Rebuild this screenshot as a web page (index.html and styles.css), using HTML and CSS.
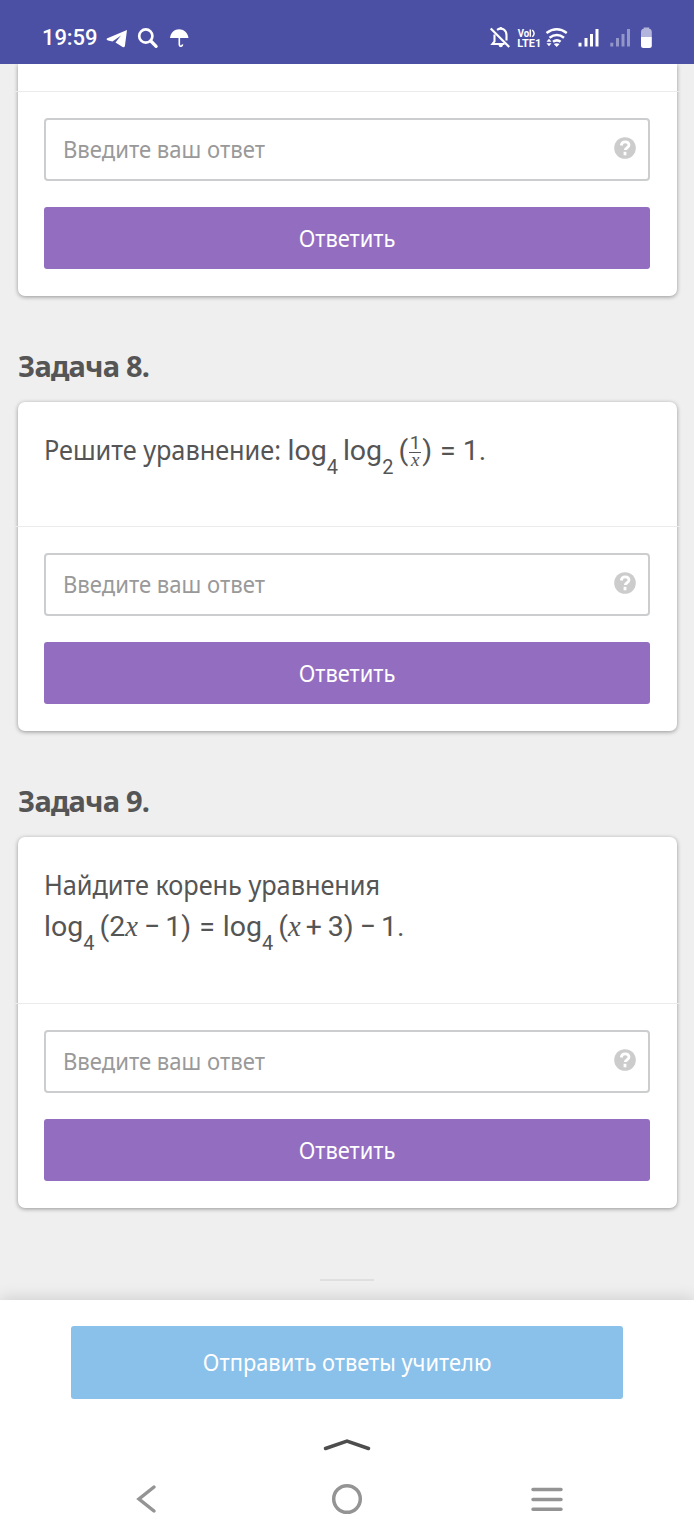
FILE: index.html
```html
<!DOCTYPE html>
<html lang="ru">
<head>
<meta charset="utf-8">
<title>Задачи</title>
<link rel="stylesheet" href="styles.css">
</head>
<body>
<header class="status">
  <span class="clock">19:59</span>
  <svg class="status-left" width="90" height="26" viewBox="105 25 90 26" fill="#fff">
    <path d="M127 30 106.800 38.500Q106 40 108 40.500L112.500 41.500 121 35.500 115.500 42.500 123 47.200Q124.500 47.500 124.900 46Z"/>
    <circle cx="145.800" cy="36" r="6.600" fill="none" stroke="#fff" stroke-width="2.700"/>
    <path d="m150.800 41 5.300 5.300" stroke="#fff" stroke-width="3.300" stroke-linecap="round"/>
    <path d="M170 38C171 26.300 187 26.300 188.500 38Z"/>
    <path d="M179.300 37v7.500q.2 2 1.900 1.700 1.500-.3 1.300-1.800" fill="none" stroke="#fff" stroke-width="1.600"/>
  </svg>
  <svg class="status-right" width="166" height="26" viewBox="488 25 166 26" fill="none" stroke="#fff">
    <path d="m490.700 28.500 18.500 18.500" stroke-width="2.200"/>
    <path d="M494.500 34.500v7l-2 2.500h12M497 29.800c5-3 9.500.2 9.500 5.200v5.500M500.700 27v2.500" stroke-width="2.100"/>
    <path d="M498.500 45h4.500q-.4 2.200-2.250 2.200T498.500 45Z" fill="#fff" stroke="none"/>
    <g fill="#fff" stroke="none" class="lte">
      <text x="517.700" y="36.800" textLength="11.500" lengthAdjust="spacingAndGlyphs">Vo</text>
      <text x="517.300" y="46.500" textLength="24" lengthAdjust="spacingAndGlyphs">LTE1</text>
    </g>
    <path d="M530.300 29.500v7.300M532.300 30q3.600 3.400 0 6.800" stroke-width="1.500"/>
    <path d="M546.500 33q10.300-7.500 20.300 0M549.500 37.700q7.500-5.500 14.500 0M553 41.800q4-2.800 7.600 0" stroke-width="2.500"/>
    <path d="m553.800 44 2.900 3 2.900-3q-2.900-1.500-5.800 0ZM546.500 41.700h5l-2.500-3ZM546.500 43.200h5l-2.500 3Z" fill="#fff" stroke="none"/>
    <path d="M580 46.500v-3.800M586 46.500v-8.500M591.500 46.500v-12.500M597 46.500v-17.500" stroke-width="3"/>
    <path d="M611.800 46.500v-3.800M617.500 46.500v-8.500M623 46.500v-12.500M628.500 46.500v-17.500" stroke-width="3" opacity=".4"/>
    <path d="M641 37v-5q0-3 2.700-3.200V27.500h5.500v1.300q2.600.2 2.600 3.200v5Z" fill="#b4b5dc" stroke="none"/>
    <path d="M641 37h10.800v8.500q0 2.500-2.500 2.500h-5.800q-2.500 0-2.500-2.500Z" fill="#fff" stroke="none"/>
  </svg>
</header>

<main class="content">
  <section class="card card-cut">
    <div class="task"></div>
    <form class="answer">
      <label class="field"><span>Введите ваш ответ</span><svg class="help" viewBox="0 0 22 22"><circle cx="11" cy="11" r="10.800"/><path d="M7.300 8.500c.3-3 1.800-3.700 3.800-3.700 2.300 0 3.900 1.200 3.900 3.300 0 2.700-3.700 2.600-3.700 5"/><path d="M11 14.800v3.500"/></svg></label>
      <button type="button" class="submit"><span>Ответить</span></button>
    </form>
  </section>

  <h2 class="title">Задача 8.</h2>
  <section class="card card-eight">
    <div class="task">
      <p class="line"><span class="words words-eight">Решите уравнение:</span><span class="math m8a">log<sub>4</sub></span><span class="math m8b">log<sub>2</sub></span><span class="math m8c">(<span class="frac"><span>1</span><i>x</i></span>)</span><span class="math m8d">=</span><span class="math m8e">1.</span></p>
    </div>
    <form class="answer">
      <label class="field"><span>Введите ваш ответ</span><svg class="help" viewBox="0 0 22 22"><circle cx="11" cy="11" r="10.800"/><path d="M7.300 8.500c.3-3 1.800-3.700 3.800-3.700 2.300 0 3.900 1.200 3.900 3.300 0 2.700-3.700 2.600-3.700 5"/><path d="M11 14.800v3.500"/></svg></label>
      <button type="button" class="submit"><span>Ответить</span></button>
    </form>
  </section>

  <h2 class="title">Задача 9.</h2>
  <section class="card card-nine">
    <div class="task">
      <p class="line"><span class="words words-nine">Найдите корень уравнения</span></p>
      <p class="line"><span class="math">log<sub>4</sub></span><span class="math m9b">(2<i>x</i></span><span class="math m9c">−</span><span class="math m9d">1)</span><span class="math m9e">=</span><span class="math m9f">log<sub>4</sub></span><span class="math m9g">(<i>x</i></span><span class="math m9h">+</span><span class="math m9i">3)</span><span class="math m9j">−</span><span class="math m9k">1.</span></p>
    </div>
    <form class="answer">
      <label class="field"><span>Введите ваш ответ</span><svg class="help" viewBox="0 0 22 22"><circle cx="11" cy="11" r="10.800"/><path d="M7.300 8.500c.3-3 1.800-3.700 3.800-3.700 2.300 0 3.900 1.200 3.900 3.300 0 2.700-3.700 2.600-3.700 5"/><path d="M11 14.800v3.500"/></svg></label>
      <button type="button" class="submit"><span>Ответить</span></button>
    </form>
  </section>
  <hr class="rule">
</main>

<footer class="bottom">
  <button type="button" class="send"><span>Отправить ответы учителю</span></button>
  <svg class="expand" width="48" height="16" viewBox="0 0 48 16"><path d="M2.500 11.500 24 4l21.500 7.500"/></svg>
  <nav class="system">
    <svg width="34" height="34" viewBox="0 0 34 34"><path d="M24 5 9 17l15 12"/></svg>
    <svg width="34" height="34" viewBox="0 0 34 34"><circle cx="17" cy="17" r="13.300"/></svg>
    <svg width="34" height="34" viewBox="0 0 34 34"><path d="M3 7.500h28M3 17.400h28M3 27.300h28"/></svg>
  </nav>
</footer>
</body>
</html>
```

FILE: styles.css
```css
* { box-sizing: border-box; }

body {
  margin: 0;
  width: 694px;
  height: 1536px;
  display: flex;
  flex-direction: column;
  overflow: hidden;
  background: #efefef;
  color: #555;
  font-family: "Noto Sans", sans-serif;
}

.status {
  flex: none;
  height: 64px;
  padding: 12px 40px 0 42px;
  display: flex;
  align-items: center;
  background: #4b50a4;
  color: #fff;
  position: relative;
  z-index: 1;
}
.clock {
  width: 63px;
  font: 500 22px/26px Roboto, sans-serif;
  letter-spacing: -0.1px;
}
.status-right { margin-left: auto; }
.lte { font: 700 10.500px Roboto, sans-serif; }

.content {
  flex: none;
  height: 1236px;
}

.card {
  width: 659px;
  margin-left: 18px;
  background: #fff;
  border-radius: 7px;
  box-shadow: 0 1px 4px rgba(0, 0, 0, .38);
  display: flex;
  flex-direction: column;
}
.card-cut { height: 232px; border-radius: 0 0 7px 7px; }
.card-eight { height: 329px; }
.card-nine { height: 371px; }

.task {
  flex: 1;
  padding: 27px 26px 0;
}
.card-cut .task { padding-top: 0; }

.title {
  margin: 0;
  height: 106px;
  padding: 50px 0 0 18px;
  font-size: 29px;
  line-height: 40px;
  font-weight: 700;
  letter-spacing: -.8px;
}

.line {
  margin: 0;
  height: 42px;
  display: flex;
  align-items: baseline;
  line-height: 42px;
  white-space: nowrap;
}
.words {
  font-size: 26.500px;
  transform: scaleX(.956);
  transform-origin: left;
}
.words-eight { width: 243.500px; letter-spacing: -.05px; }
.words-nine { letter-spacing: -.05px; }
.math {
  font-family: Roboto, sans-serif;
  font-size: 28.500px;
}
.math sub {
  font-size: 20px;
  line-height: 0;
  vertical-align: baseline;
  position: relative;
  top: 14px;
}
.math i { font-family: "Liberation Serif", serif; }

.m8b { margin-left: 5px; }
.m8c { margin-left: 5px; }
.m8d { margin-left: 8px; }
.m8e { margin-left: 7px; }
.m9b { margin-left: 5px; }
.m9c { margin-left: 6px; }
.m9d { margin-left: 5px; }
.m9e { margin-left: 8px; }
.m9f { margin-left: 8px; }
.m9g { margin-left: 5px; }
.m9h { margin-left: 5px; }
.m9i { margin-left: 6px; }
.m9j { margin-left: 6px; }
.m9k { margin-left: 5px; }

.frac {
  display: inline-flex;
  flex-direction: column;
  align-items: center;
  width: 12px;
  margin: 0 1px;
  vertical-align: 11px;
  font-size: 19px;
  line-height: 19px;
}
.math .frac { height: 32px; margin-bottom: -25px; }
.frac i {
  align-self: stretch;
  border-top: 1px solid #555;
  text-align: center;
  line-height: 13px;
}

.answer {
  margin: 0 -3px;
  height: 205px;
  padding: 26px 30px 27px 29px;
  border-top: 1px solid #ebebeb;
}
.field {
  height: 63px;
  padding: 0 14px 0 17px;
  display: flex;
  align-items: center;
  justify-content: space-between;
  border: 2px solid #cbcdcf;
  border-radius: 4px;
  color: #999;
  font-size: 23.500px;
}
.field span {
  margin-top: -2px;
  transform: scaleX(.94);
  transform-origin: left;
}
.help { width: 22px; height: 22px; margin: -4px -2px 0 0; }
.help circle { fill: #ccc; }
.help path { fill: none; stroke: #fff; stroke-width: 2.800; }

.submit, .send {
  display: flex;
  align-items: center;
  justify-content: center;
  border: 0;
  border-radius: 3px;
  color: #fff;
  font-family: "Noto Sans", sans-serif;
  font-size: 23.500px;
}
.submit span, .send span { transform: scaleX(.93); }
.send span { margin-top: -1px; }
.submit {
  width: 100%;
  height: 62px;
  margin-top: 26px;
  padding: 0;
  background: #936dbf;
}

.rule {
  width: 54px;
  height: 2px;
  margin: 71px auto 0;
  border: 0;
  background: #dfdfdf;
}

.bottom {
  flex: none;
  height: 236px;
  padding-top: 26px;
  display: flex;
  flex-direction: column;
  align-items: center;
  background: #fff;
  box-shadow: 0 0 16px rgba(0, 0, 0, .17);
  position: relative;
}
.send {
  width: 552px;
  height: 73px;
  background: #8ac1ea;
}
.expand { margin-top: 38px; }
.expand path {
  fill: none;
  stroke: #4d4d4d;
  stroke-width: 3.500;
  stroke-linecap: round;
}
.system {
  width: 434px;
  margin-top: 29px;
  display: flex;
  justify-content: space-between;
}
.system svg {
  fill: none;
  stroke: #949494;
  stroke-width: 3.500;
  stroke-linecap: round;
}
```
